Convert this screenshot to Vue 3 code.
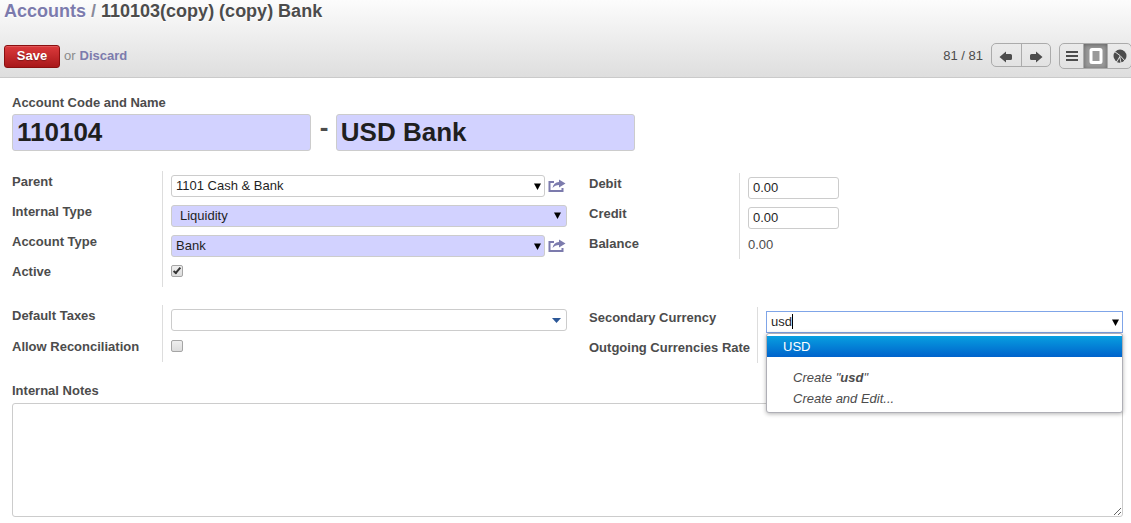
<script setup>
import { ref } from 'vue'

const code = ref('110104')
const name = ref('USD Bank')
const parent = ref('1101 Cash & Bank')
const internalType = ref('Liquidity')
const accountType = ref('Bank')
const active = ref(true)
const taxes = ref('')
const reconcile = ref(false)
const debit = ref('0.00')
const credit = ref('0.00')
const currency = ref('usd')
const notes = ref('')
</script>

<template>
  <div class="page">
    <header class="head">
      <h1 class="crumbs"><a href="#">Accounts</a> <span class="slash">/</span> 110103(copy) (copy) Bank</h1>
      <div class="bar">
        <button type="button" class="save">Save</button>
        <span class="or">or</span>
        <a href="#" class="discard">Discard</a>
        <span class="count">81 / 81</span>
        <div class="pager">
          <button type="button" aria-label="Previous">
            <svg width="14" height="12" viewBox="0 0 14 12"><path d="M0.5 6L7 0.5V3H11.5Q13 3 13 4.5V7.5Q13 9 11.5 9H7V11.5Z" /></svg>
          </button>
          <button type="button" aria-label="Next">
            <svg width="14" height="12" viewBox="0 0 14 12"><path d="M13.5 6L7 0.5V3H2.5Q1 3 1 4.5V7.5Q1 9 2.5 9H7V11.5Z" /></svg>
          </button>
        </div>
        <div class="views">
          <button type="button" aria-label="List">
            <svg width="14" height="14" viewBox="0 0 14 14"><path d="M1 2h12v2H1zM1 6h12v2H1zM1 10h12v2H1z" /></svg>
          </button>
          <button type="button" class="on" aria-label="Form">
            <svg width="14" height="16" viewBox="0 0 14 16"><rect x="2" y="1.5" width="10" height="13" rx="1" class="sheet-icon" /></svg>
          </button>
          <button type="button" aria-label="Graph">
            <svg width="14" height="14" viewBox="0 0 14 14"><circle cx="7" cy="7" r="6.5" /><path d="M7 6.5L2.5 14H8.5Z" class="light" /><path d="M1.5 2.5L7 6.5L12.5 12.5" class="cut" /><path d="M6.5 9L4 13.2Q6 14 7.5 13.5Z" /></svg>
          </button>
        </div>
      </div>
    </header>

    <form class="sheet" @submit.prevent>
      <label for="code" class="lbl">Account Code and Name</label>
      <div class="title">
        <input id="code" v-model="code" class="big req" type="text">
        <span class="dash">-</span>
        <input v-model="name" class="big req" type="text" aria-label="Account name">
      </div>

      <div class="cols first">
        <div class="group">
          <label for="parent" class="lbl">Parent</label>
          <div class="cell">
            <div class="line">
              <div class="combo">
                <input id="parent" v-model="parent" type="text">
                <svg class="caret low" width="7" height="7" viewBox="0 0 7 7"><path d="M0 0.5H7L3.5 7Z" /></svg>
              </div>
              <button type="button" class="open" aria-label="Open parent">
                <svg width="18" height="14" viewBox="0 0 18 14"><path d="M6 3H1.5V12H14.5V9" class="box" /><path d="M11 0.5L17.5 4.5L11 8.5V6Q7 6 4.5 9Q5.5 3.5 11 3Z" class="arrow" /></svg>
              </button>
            </div>
          </div>
          <label for="itype" class="lbl">Internal Type</label>
          <div class="cell">
            <div class="combo">
              <select id="itype" v-model="internalType" class="req">
                <option>Liquidity</option>
              </select>
              <svg class="caret" width="7" height="7" viewBox="0 0 7 7"><path d="M0 0.5H7L3.5 7Z" /></svg>
            </div>
          </div>
          <label for="atype" class="lbl">Account Type</label>
          <div class="cell">
            <div class="line">
              <div class="combo">
                <input id="atype" v-model="accountType" class="req" type="text">
                <svg class="caret low" width="7" height="7" viewBox="0 0 7 7"><path d="M0 0.5H7L3.5 7Z" /></svg>
              </div>
              <button type="button" class="open" aria-label="Open account type">
                <svg width="18" height="14" viewBox="0 0 18 14"><path d="M6 3H1.5V12H14.5V9" class="box" /><path d="M11 0.5L17.5 4.5L11 8.5V6Q7 6 4.5 9Q5.5 3.5 11 3Z" class="arrow" /></svg>
              </button>
            </div>
          </div>
          <label for="active" class="lbl">Active</label>
          <div class="cell last"><input id="active" v-model="active" type="checkbox"></div>
        </div>

        <div class="group right">
          <label for="debit" class="lbl">Debit</label>
          <div class="cell"><input id="debit" v-model="debit" class="num" type="text"></div>
          <label for="credit" class="lbl">Credit</label>
          <div class="cell"><input id="credit" v-model="credit" class="num" type="text"></div>
          <span class="lbl">Balance</span>
          <div class="cell last"><span class="value">0.00</span></div>
        </div>
      </div>

      <div class="cols second">
        <div class="group">
          <label for="taxes" class="lbl">Default Taxes</label>
          <div class="cell">
            <div class="combo">
              <input id="taxes" v-model="taxes" type="text">
              <svg class="caret blue" width="9" height="5" viewBox="0 0 9 5"><path d="M0 0H9L4.5 5Z" /></svg>
            </div>
          </div>
          <label for="rec" class="lbl">Allow Reconciliation</label>
          <div class="cell last"><input id="rec" v-model="reconcile" type="checkbox"></div>
        </div>

        <div class="group right wide">
          <label for="currency" class="lbl">Secondary Currency</label>
          <div class="cell">
            <div class="combo">
              <input id="currency" v-model="currency" class="focus" type="text">
              <span class="cursor"></span>
              <svg class="caret low" width="7" height="7" viewBox="0 0 7 7"><path d="M0 0.5H7L3.5 7Z" /></svg>
              <ul class="menu">
                <li><a href="#" class="hit">USD</a></li>
                <li><a href="#" class="extra gap">Create "<b>usd</b>"</a></li>
                <li><a href="#" class="extra">Create and Edit...</a></li>
              </ul>
            </div>
          </div>
          <span class="lbl">Outgoing Currencies Rate</span>
          <div class="cell last"></div>
        </div>
      </div>

      <label for="notes" class="lbl">Internal Notes</label>
      <textarea id="notes" v-model="notes"></textarea>
    </form>
  </div>
</template>

<style>
body { margin: 0; background: #fff; }
</style>

<style scoped>
.page {
  font: 13px/20px "Liberation Sans", Arial, sans-serif;
  color: #4c4c4c;
}
.page * { box-sizing: border-box; }
a { color: #7c7bad; text-decoration: none; }
button { font: inherit; cursor: pointer; }

.head {
  height: 78px;
  border-bottom: 1px solid #cacaca;
  background: linear-gradient(#fcfcfc, #dedede);
  overflow: hidden;
}
.crumbs {
  margin: 0;
  padding-left: 4px;
  font-size: 18px;
  line-height: 22px;
  font-weight: bold;
  text-shadow: 0 1px 1px #fff;
}
.slash { color: #8a8a9a; }
.bar {
  display: flex;
  align-items: center;
  height: 26px;
  margin-top: 21px;
  padding-left: 4px;
}
.save {
  width: 56px;
  height: 23px;
  padding: 0;
  border: 1px solid #8a1010;
  border-radius: 3px;
  background: linear-gradient(#dc3a3c, #a8181a);
  box-shadow: inset 0 1px 0 rgba(255, 255, 255, .15);
  color: #fff;
  font-weight: bold;
  line-height: 20px;
  text-shadow: 0 1px 1px rgba(0, 0, 0, .3);
}
.or { margin: 0 4px; color: #8a8a8a; }
.discard { font-weight: bold; }
.count { margin-left: auto; margin-right: 8px; }
.pager, .views {
  display: flex;
  flex: none;
  border: 1px solid #ababab;
  border-radius: 5px;
}
.pager { width: 60px; height: 24px; margin-right: 8px; align-self: flex-start; }
.views { width: 73px; height: 26px; margin-right: -1px; overflow: hidden; }
.pager button, .views button {
  display: flex;
  flex: 1;
  align-items: center;
  justify-content: center;
  padding: 0;
  border: 0;
  background: none;
}
.pager button { padding-top: 3px; }
.pager button + button, .views button + button { border-left: 1px solid #ababab; }
.views .on { background: #999; box-shadow: inset 0 1px 4px rgba(0, 0, 0, .35); }
.pager svg, .views svg { fill: #4c4c4c; }
.views .sheet-icon { fill: none; stroke: #fff; stroke-width: 3; }
.cut { fill: none; stroke: #e2e2e2; stroke-width: 1; }
.light { fill: #e2e2e2; }

.sheet { padding: 14px 8px 6px 12px; }
.lbl { display: block; font-weight: bold; line-height: 22px; white-space: nowrap; }
input[type="text"], select, textarea {
  display: block;
  width: 100%;
  margin: 0;
  border: 1px solid #ccc;
  border-radius: 3px;
  background: #fff;
  color: #1f1f1f;
  font: inherit;
  outline: none;
}
input[type="text"], select { height: 22px; padding: 0 4px 1px; }
input[type="text"].req, select.req { background: #d2d2ff; }
.title { display: flex; }
.title input.big {
  width: 26.9%;
  height: 37px;
  padding: 0 4px;
  font-size: 26px;
  line-height: 32px;
  font-weight: bold;
}
.dash { width: 25px; padding-left: 9px; font-size: 26px; line-height: 26px; font-weight: bold; }

.cols { display: grid; grid-template-columns: 555fr 534fr; column-gap: 22px; align-items: start; }
.first { margin-top: 20px; }
.second { margin: 18px 0 17px; }
.group { display: grid; grid-template-columns: 150px 1fr; }
.second .group:not(.wide) { grid-template-rows: 31px 26px; }
.second .group:not(.wide) .cell { height: auto; }
.right { padding-top: 2px; }
.wide { grid-template-columns: 168px 1fr; }
.cell { height: 30px; padding: 4px 0 0 8px; border-left: 1px solid #ddd; }
.cell.last { height: 26px; }
.line { display: flex; }
.combo { position: relative; flex: 1; }
.caret { position: absolute; right: 6px; top: 7px; pointer-events: none; }
.caret.low { top: 8px; right: 4px; }
.caret.blue { top: 9px; fill: #2b5797; }
select { appearance: none; }
select.req { padding: 0 8px; }
.open {
  display: flex;
  align-items: center;
  width: 22px;
  height: 22px;
  padding: 0 0 0 3px;
  border: 0;
  background: none;
}
.box { fill: none; stroke: #7c7bad; stroke-width: 2; }
.arrow { fill: #7c7bad; stroke: #fff; stroke-width: 1; paint-order: stroke; }
input[type="text"].num { width: 91px; }
.value { display: block; line-height: 16px; }
input[type="checkbox"] {
  display: block;
  appearance: none;
  position: relative;
  width: 12px;
  height: 12px;
  margin: 0;
  border: 1px solid #a5a5a5;
  border-radius: 2px;
  background: linear-gradient(#eee, #dcdcdc);
}
input[type="checkbox"]:checked::after {
  content: "";
  position: absolute;
  left: 3px;
  top: 0;
  width: 4px;
  height: 8px;
  border: solid #333;
  border-width: 0 2px 2px 0;
  transform: rotate(40deg);
  box-sizing: border-box;
}

input[type="text"].focus { border-color: #7fa5e8; border-radius: 0; }
.cursor { position: absolute; left: 26px; top: 3px; width: 1px; height: 15px; background: #000; }
.menu {
  position: absolute;
  z-index: 5;
  top: 22px;
  left: 0;
  right: 0;
  margin: 0;
  padding: 2px 0 3px;
  list-style: none;
  border: 1px solid #afafb6;
  border-radius: 3px;
  background: #fff;
  box-shadow: 0 1px 4px rgba(0, 0, 0, .3);
}
.menu a { display: block; line-height: 21px; }
.menu .hit { padding-left: 16px; background: linear-gradient(#089fe0, #0063cc); color: #fff; }
.menu .extra { padding-left: 26px; color: #4c4c4c; font-style: italic; }
.menu .gap { margin-top: 10px; }
textarea { height: 114px; margin-top: 1px; padding: 4px; resize: vertical; }
</style>
